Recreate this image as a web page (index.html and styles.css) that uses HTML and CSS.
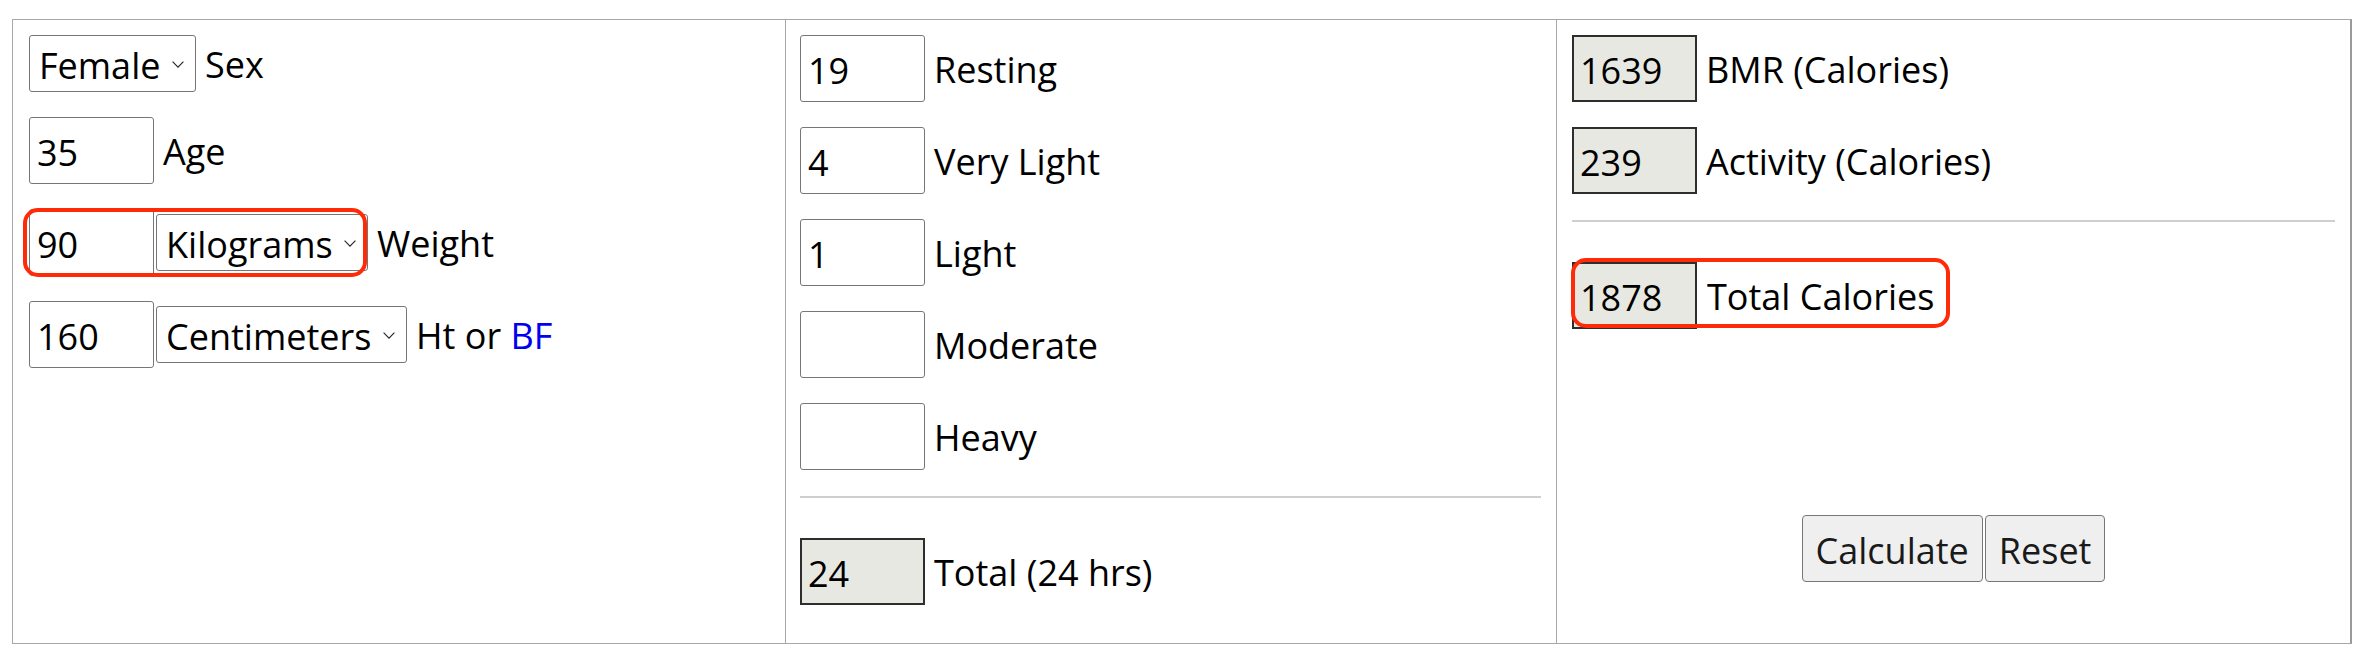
FILE: index.html
```html
<!DOCTYPE html>
<html lang="en">
<head>
    <meta charset="UTF-8">
    <meta name="viewport" content="width=device-width, initial-scale=1.0">
    <title>Calorie Calculator</title>
    <link rel="stylesheet" href="styles.css">
</head>
<body>
    <form class="calc" onsubmit="return false">
        <div class="col col-person">
            <div class="row">
                <select class="pick" name="sex">
                    <option>Female</option>
                    <option>Male</option>
                </select>
                <span class="label">Sex</span>
            </div>
            <div class="row">
                <input type="text" class="num" name="age" value="35">
                <span class="label">Age</span>
            </div>
            <div class="row">
                <span class="pair mark mark-weight">
                    <input type="text" class="num" name="weight" value="90">
                    <select class="pick" name="weight_unit">
                        <option>Kilograms</option>
                        <option>Pounds</option>
                    </select>
                </span>
                <span class="label">Weight</span>
            </div>
            <div class="row">
                <span class="pair">
                    <input type="text" class="num" name="height" value="160">
                    <select class="pick" name="height_unit">
                        <option>Centimeters</option>
                        <option>Inches</option>
                    </select>
                </span>
                <span class="label">Ht or <a href="#" class="link">BF</a></span>
            </div>
        </div>

        <div class="col col-hours">
            <div class="row">
                <input type="text" class="num" name="resting" value="19">
                <span class="label">Resting</span>
            </div>
            <div class="row">
                <input type="text" class="num" name="very_light" value="4">
                <span class="label">Very Light</span>
            </div>
            <div class="row">
                <input type="text" class="num" name="light" value="1">
                <span class="label">Light</span>
            </div>
            <div class="row">
                <input type="text" class="num" name="moderate" value="">
                <span class="label">Moderate</span>
            </div>
            <div class="row">
                <input type="text" class="num" name="heavy" value="">
                <span class="label">Heavy</span>
            </div>
            <hr class="rule">
            <div class="row">
                <input type="text" class="num out" name="total_hours" value="24" readonly>
                <span class="label">Total (24 hrs)</span>
            </div>
        </div>

        <div class="col col-result">
            <div class="row">
                <input type="text" class="num out" name="bmr" value="1639" readonly>
                <span class="label">BMR (Calories)</span>
            </div>
            <div class="row">
                <input type="text" class="num out" name="activity" value="239" readonly>
                <span class="label">Activity (Calories)</span>
            </div>
            <hr class="rule">
            <div class="row">
                <span class="pair mark mark-total">
                    <input type="text" class="num out" name="total" value="1878" readonly>
                    <span class="label">Total Calories</span>
                </span>
            </div>
            <div class="actions">
                <button type="submit" class="btn">Calculate</button>
                <button type="reset" class="btn">Reset</button>
            </div>
        </div>
    </form>
</body>
</html>
```

FILE: styles.css
```css
body {
    margin: 0;
    font-family: "Open Sans", "Noto Sans", sans-serif;
    font-size: 36px;
    color: #000;
    background: #fff;
}
.calc {
    display: grid;
    grid-template-columns: 772px 771px 1fr;
    width: 2340px;
    margin: 19px 0 0 12px;
    border: 1px solid #a8a8a8;
    border-right: 2px solid #9a9a9a;
    box-sizing: border-box;
}
.col {
    display: flex;
    flex-direction: column;
    padding: 15px 15px 13px;
}
.col-person {
    padding-left: 16px;
}
.col-hours {
    border-left: 1px solid #a8a8a8;
    padding-left: 14px;
}
.col-result {
    border-left: 1px solid #a8a8a8;
    padding-right: 15px;
}
.row {
    display: flex;
    align-items: center;
    gap: 9px;
    margin-bottom: 25px;
}
.label {
    white-space: nowrap;
    line-height: 1.36;
    padding-top: 4px;
}
.link {
    color: #0000ee;
    text-decoration: none;
}
.num {
    width: 125px;
    height: 67px;
    box-sizing: border-box;
    margin: 0;
    padding: 4px 7px 0;
    font-family: inherit;
    font-size: 36px;
    color: #000;
    background: #fff;
    border: 1px solid #767676;
    border-radius: 3px;
}
.num.out {
    background: #e8e8e3;
    border: 2px solid #2e2e2e;
    border-radius: 0;
    padding: 4px 6px 0;
    outline: none;
}
.pick {
    appearance: none;
    -webkit-appearance: none;
    height: 57px;
    box-sizing: border-box;
    margin: 0;
    padding: 4px 34px 0 9px;
    font-family: inherit;
    font-size: 36px;
    color: #000;
    border: 1px solid #767676;
    border-radius: 3px;
    background: #fff url("data:image/svg+xml,%3Csvg xmlns='http://www.w3.org/2000/svg' width='12' height='7' viewBox='0 0 12 7'%3E%3Cpath d='M0.6 0.6 L6 6.2 L11.4 0.6' fill='none' stroke='%23222' stroke-width='1.1'/%3E%3C/svg%3E") no-repeat right 11px top 52%;
}
.pair {
    display: inline-flex;
    align-items: center;
    gap: 2px;
}
.mark {
    position: relative;
}
.mark::after {
    content: "";
    position: absolute;
    border: 4px solid #ff2a08;
    border-radius: 15px;
    pointer-events: none;
}
.mark-weight::after {
    left: -6px;
    right: 1px;
    top: -1px;
    bottom: -1px;
}
.mark-total {
    gap: 10px;
}
.mark-total::after {
    left: -1px;
    right: -16px;
    top: -4px;
    bottom: 1px;
}
.rule {
    height: 2px;
    margin: 1px 0 40px;
    border: 0;
    background: #cfcfcf;
}
.actions {
    display: flex;
    justify-content: center;
    gap: 2px;
    margin-top: auto;
    margin-bottom: 48px;
}
.btn {
    height: 67px;
    padding: 3px 13px 0;
    font-family: inherit;
    font-size: 36px;
    color: #1a1a1a;
    background: #efefef;
    border: 1px solid #767676;
    border-radius: 4px;
    cursor: pointer;
}
.btn:hover {
    background: #e5e5e5;
}
```
